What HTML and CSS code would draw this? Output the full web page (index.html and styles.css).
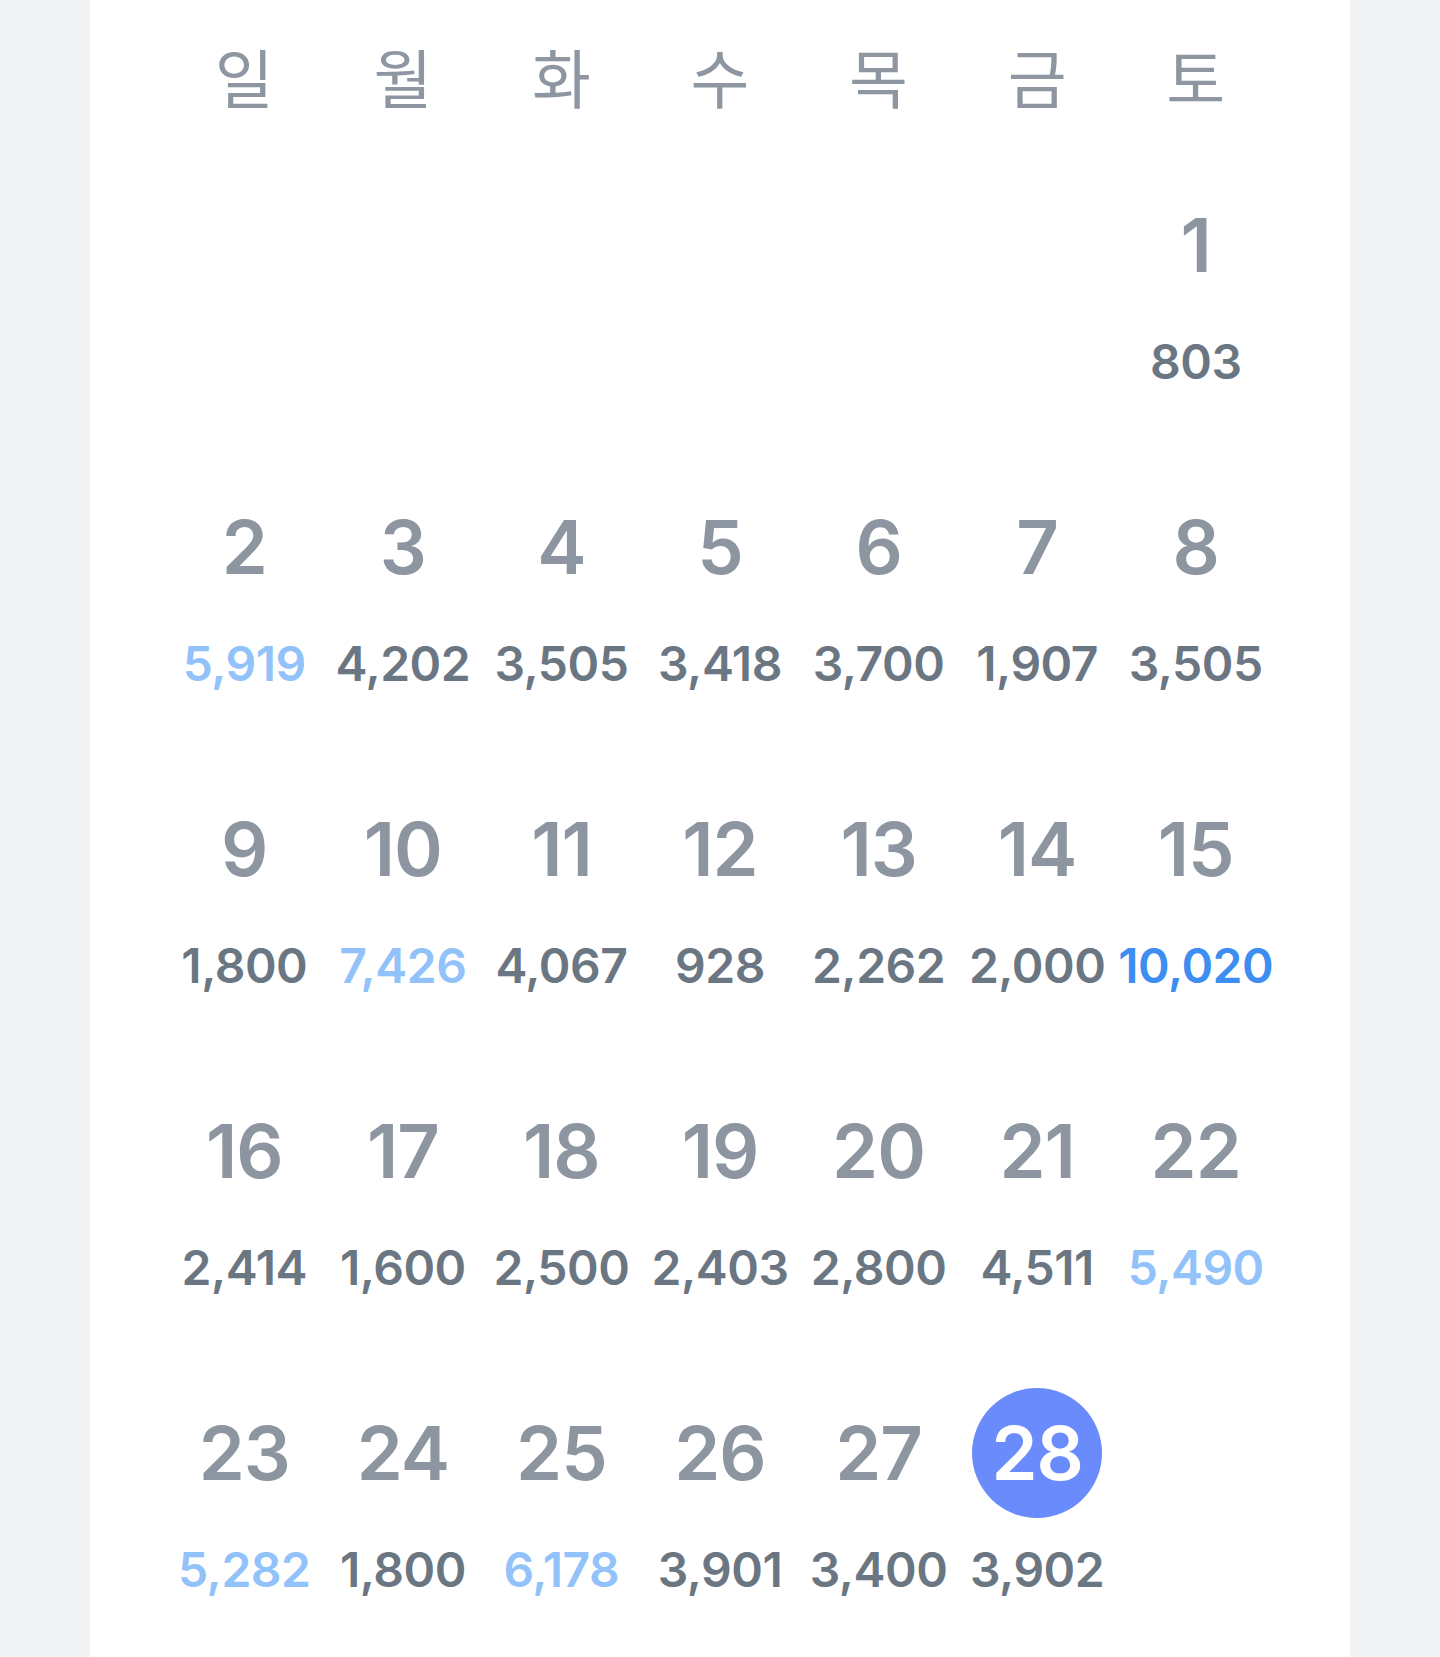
FILE: index.html
```html
<!DOCTYPE html>
<html lang="ko">
<head>
<meta charset="utf-8">
<title>걸음 수 달력</title>
<link rel="stylesheet" href="styles.css">
</head>
<body>
<main class="card">
  <div class="weekdays">
    <div class="wd">일</div><div class="wd">월</div><div class="wd">화</div><div class="wd">수</div><div class="wd">목</div><div class="wd">금</div><div class="wd">토</div>
  </div>
  <div class="days">
    <div class="cell empty"></div><div class="cell empty"></div><div class="cell empty"></div><div class="cell empty"></div><div class="cell empty"></div><div class="cell empty"></div>
    <div class="cell"><span class="num">1</span><span class="cnt">803</span></div>

    <div class="cell"><span class="num">2</span><span class="cnt light">5,919</span></div>
    <div class="cell"><span class="num">3</span><span class="cnt">4,202</span></div>
    <div class="cell"><span class="num">4</span><span class="cnt">3,505</span></div>
    <div class="cell"><span class="num">5</span><span class="cnt">3,418</span></div>
    <div class="cell"><span class="num">6</span><span class="cnt">3,700</span></div>
    <div class="cell"><span class="num">7</span><span class="cnt">1,907</span></div>
    <div class="cell"><span class="num">8</span><span class="cnt">3,505</span></div>

    <div class="cell"><span class="num">9</span><span class="cnt">1,800</span></div>
    <div class="cell"><span class="num">10</span><span class="cnt light">7,426</span></div>
    <div class="cell"><span class="num">11</span><span class="cnt">4,067</span></div>
    <div class="cell"><span class="num">12</span><span class="cnt">928</span></div>
    <div class="cell"><span class="num">13</span><span class="cnt">2,262</span></div>
    <div class="cell"><span class="num">14</span><span class="cnt">2,000</span></div>
    <div class="cell"><span class="num">15</span><span class="cnt strong">10,020</span></div>

    <div class="cell"><span class="num">16</span><span class="cnt">2,414</span></div>
    <div class="cell"><span class="num">17</span><span class="cnt">1,600</span></div>
    <div class="cell"><span class="num">18</span><span class="cnt">2,500</span></div>
    <div class="cell"><span class="num">19</span><span class="cnt">2,403</span></div>
    <div class="cell"><span class="num">20</span><span class="cnt">2,800</span></div>
    <div class="cell"><span class="num">21</span><span class="cnt">4,511</span></div>
    <div class="cell"><span class="num">22</span><span class="cnt light">5,490</span></div>

    <div class="cell"><span class="num">23</span><span class="cnt light">5,282</span></div>
    <div class="cell"><span class="num">24</span><span class="cnt">1,800</span></div>
    <div class="cell"><span class="num">25</span><span class="cnt light">6,178</span></div>
    <div class="cell"><span class="num">26</span><span class="cnt">3,901</span></div>
    <div class="cell"><span class="num">27</span><span class="cnt">3,400</span></div>
    <div class="cell"><span class="num today">28</span><span class="cnt">3,902</span></div>
    <div class="cell empty"></div>
  </div>
</main>
</body>
</html>
```

FILE: styles.css
```css
html, body {
  margin: 0;
  padding: 0;
}

body {
  background: #f2f3f5;
  font-family: Inter, "Noto Sans", "Noto Sans CJK KR", sans-serif;
}

.card {
  width: 1260px;
  min-height: 100vh;
  margin: 0 auto;
  background: #ffffff;
  padding: 0 75px;
  box-sizing: border-box;
}

.weekdays {
  display: grid;
  grid-template-columns: repeat(7, 1fr);
  height: 150px;
  margin-bottom: 30px;
}

.wd {
  font-family: "Noto Sans CJK KR", "Noto Sans", sans-serif;
  font-size: 64px;
  font-weight: 400;
  line-height: 150px;
  color: #8e97a1;
  text-align: center;
}

.days {
  display: grid;
  grid-template-columns: repeat(7, 1fr);
  row-gap: 92px;
}

.cell {
  display: flex;
  flex-direction: column;
  align-items: center;
  height: 210px;
}

.num {
  width: 130px;
  height: 130px;
  line-height: 130px;
  border-radius: 50%;
  text-align: center;
  font-size: 74px;
  font-weight: 600;
  color: #8c95a0;
  letter-spacing: -1px;
}

.num.today {
  background: #6a8bfc;
  color: #ffffff;
}

.cnt {
  margin-top: 22px;
  height: 60px;
  line-height: 60px;
  font-size: 48px;
  font-weight: 600;
  color: #6b7683;
  white-space: nowrap;
  letter-spacing: -0.5px;
}

.cnt.light {
  color: #92c2fa;
}

.cnt.strong {
  color: #3d8ef0;
}
```
